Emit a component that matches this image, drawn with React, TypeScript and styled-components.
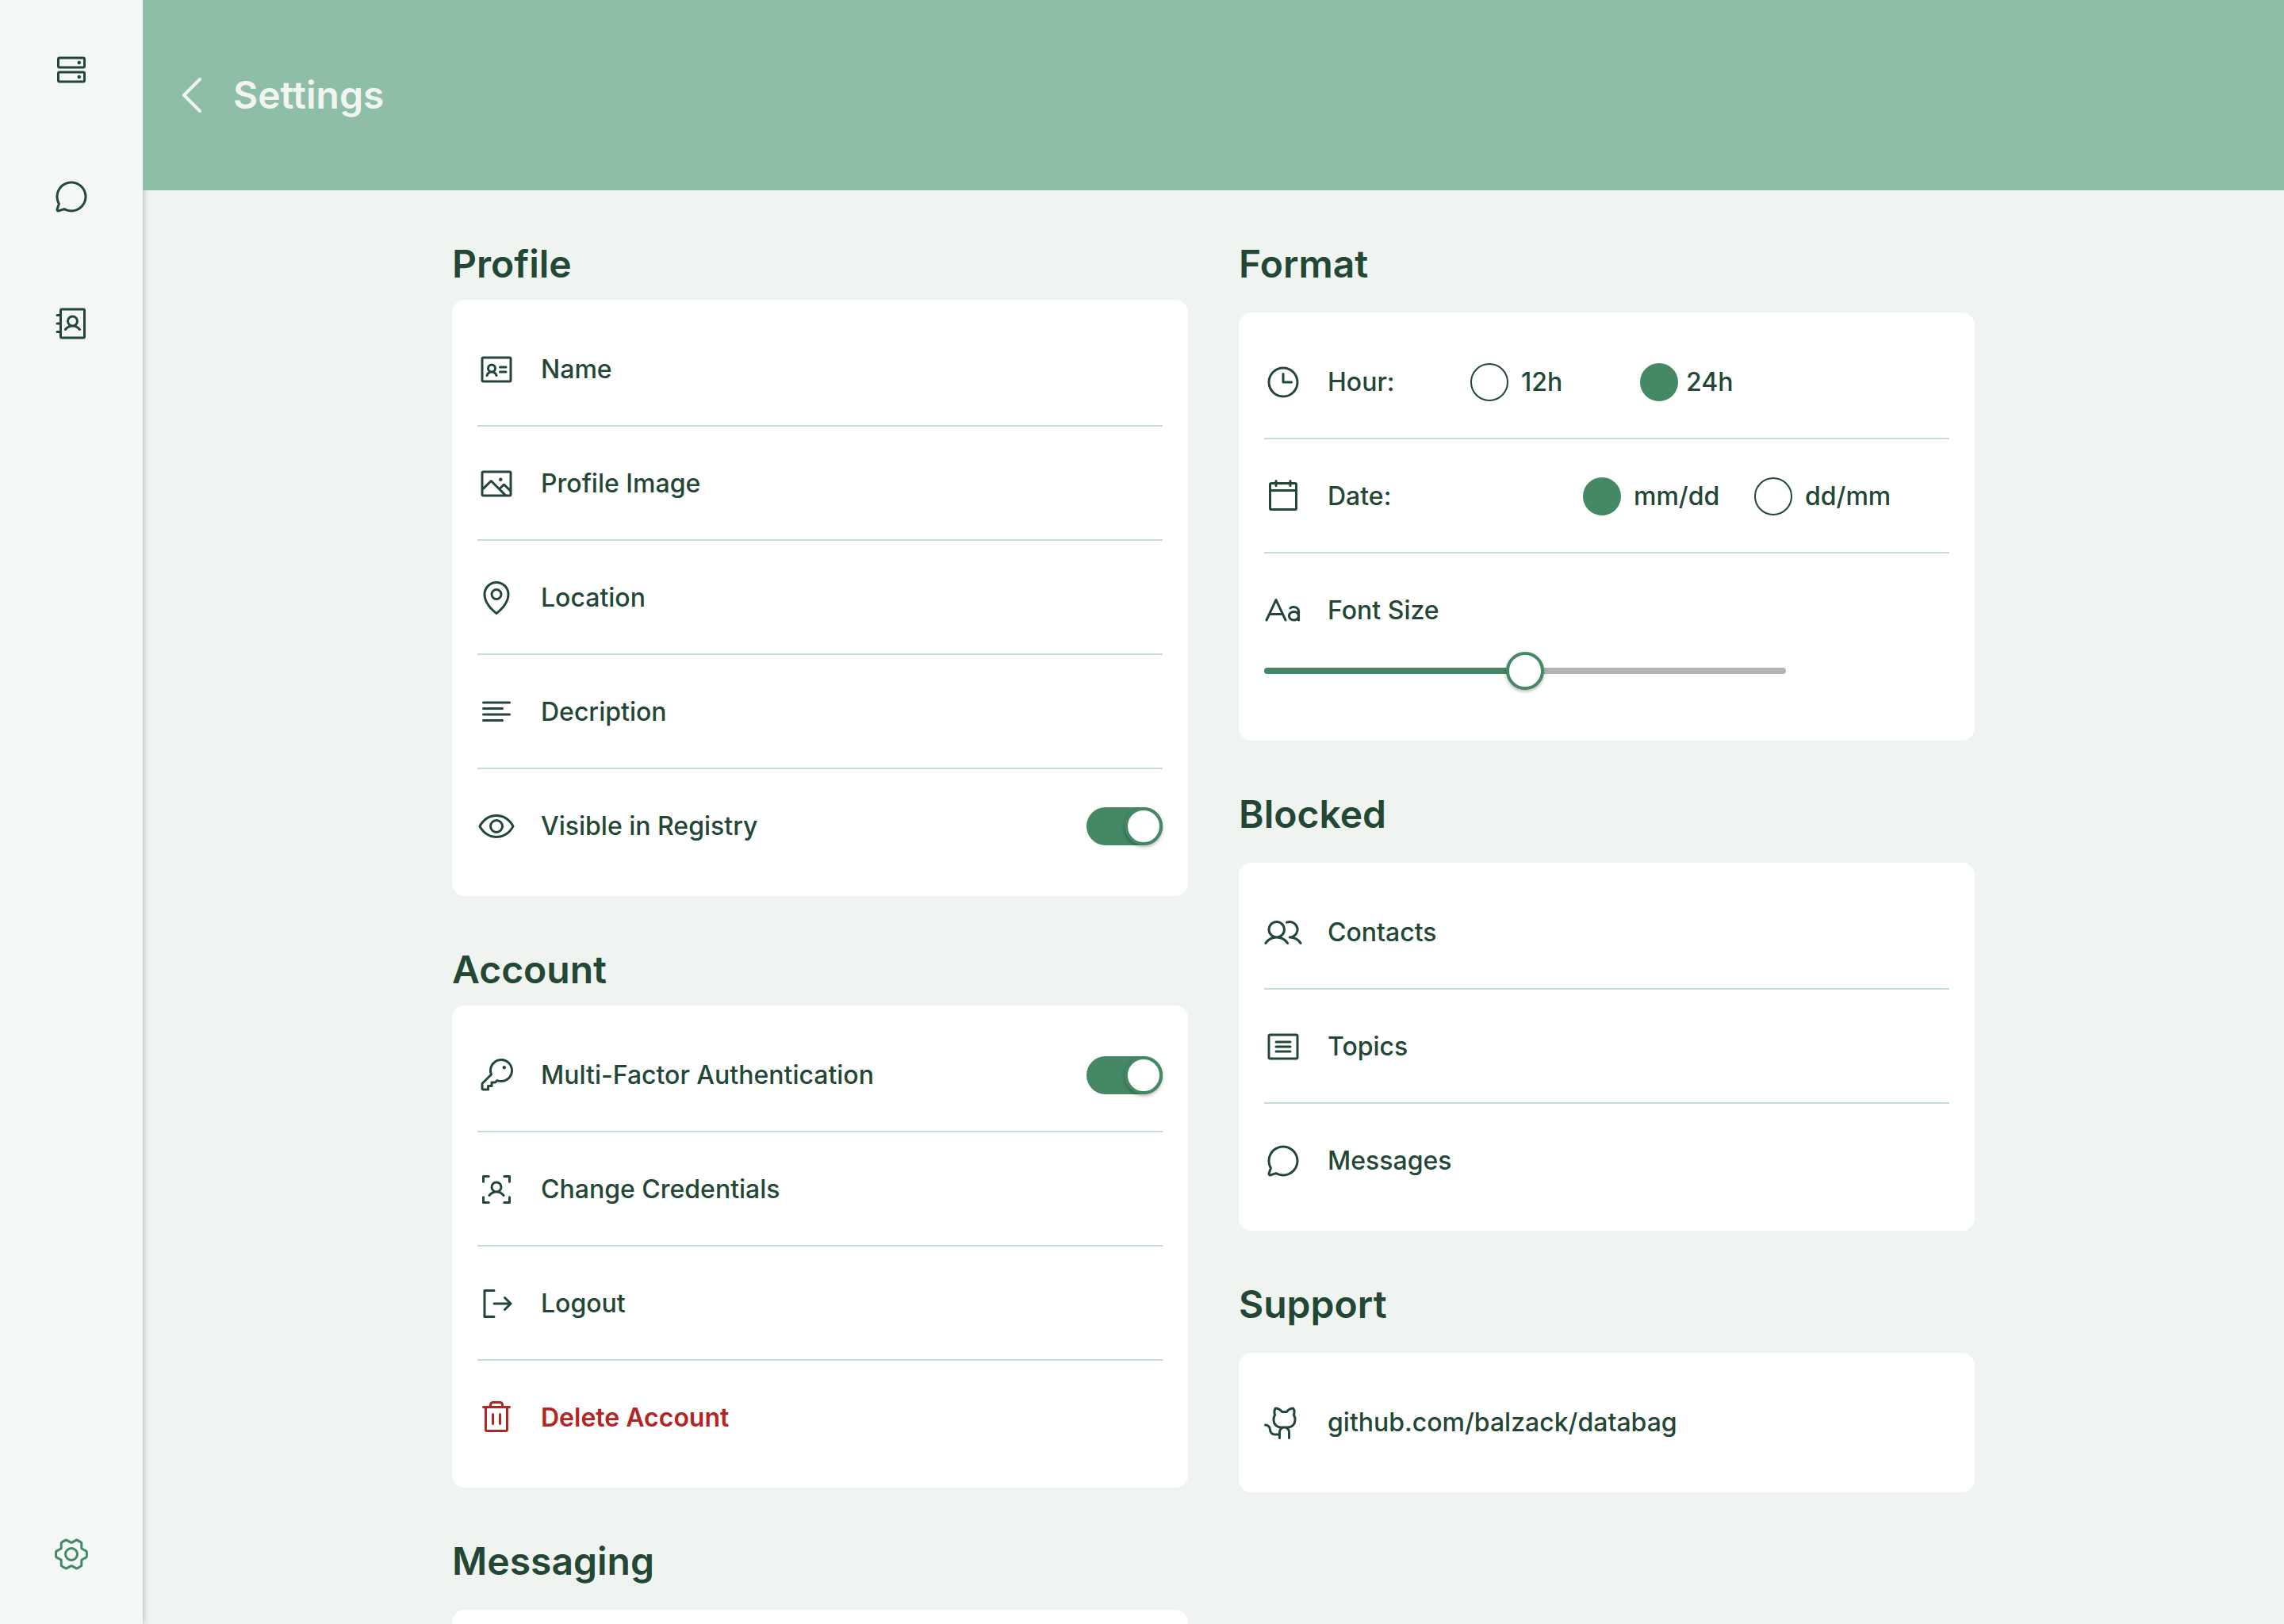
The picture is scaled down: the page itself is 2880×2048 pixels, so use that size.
import React, { useState } from "react";
import styled, { createGlobalStyle, css } from "styled-components";
import type { IconType } from "react-icons";
import {
  PiAddressBook,
  PiArticle,
  PiCalendarBlank,
  PiCaretLeft,
  PiChatCircle,
  PiClock,
  PiEye,
  PiGearSix,
  PiGithubLogo,
  PiHardDrives,
  PiIdentificationCard,
  PiImage,
  PiKey,
  PiMapPin,
  PiSignOut,
  PiTextAa,
  PiTextAlignLeft,
  PiTrash,
  PiUserFocus,
  PiUsers,
} from "react-icons/pi";

const color = {
  ink: "#234735",
  accent: "#448865",
  header: "#8fbea7",
  page: "#eff4f0",
  sidebar: "#f3f7f6",
  line: "#c4ded1",
  track: "#b3b3b3",
  danger: "#b32424",
};

const GlobalStyle = createGlobalStyle`
  *, *::before, *::after { box-sizing: border-box; }
  body {
    margin: 0;
    background: ${color.page};
    color: ${color.ink};
    font-family: Inter, "Liberation Sans", sans-serif;
    font-size: 32px;
    font-weight: 500;
    font-variant-ligatures: none;
    line-height: 48px;
  }
  button, input {
    margin: 0;
    padding: 0;
    border: 0;
    background: none;
    color: inherit;
    font: inherit;
  }
`;

const Shell = styled.div`
  display: flex;
  height: 100vh;
`;

const Sidebar = styled.nav`
  flex: none;
  display: flex;
  flex-direction: column;
  gap: 112px;
  width: 180px;
  padding: 64px 0;
  background: ${color.sidebar};
  box-shadow: 0 0 8px rgba(0, 0, 0, 0.3);
`;

const NavButton = styled.button<{ $active?: boolean }>`
  display: flex;
  justify-content: center;
  font-size: 48px;
  cursor: pointer;
  ${(p) =>
    p.$active &&
    css`
      margin-top: auto;
      color: ${color.accent};
    `}
`;

const Main = styled.div`
  flex: 1;
  display: flex;
  flex-direction: column;
  min-width: 0;
`;

const Header = styled.header`
  position: relative;
  flex: none;
  display: flex;
  align-items: center;
  gap: 18px;
  height: 240px;
  padding: 0 32px;
  background: ${color.header};
  color: #f0f5f2;
`;

const BackButton = styled.button`
  display: flex;
  font-size: 64px;
  cursor: pointer;
`;

const PageTitle = styled.h1`
  margin: 0;
  font-size: 48px;
  font-weight: 600;
  line-height: 62px;
`;

const Scroller = styled.main`
  flex: 1;
  min-height: 0;
  overflow-y: auto;
  scrollbar-width: none;
`;

const Columns = styled.div`
  display: grid;
  grid-template-columns: minmax(0, 1fr) minmax(0, 1fr);
  gap: 64px;
  max-width: 1920px;
  margin: 0 auto;
  padding: 62px 0;
`;

const Column = styled.div`
  display: flex;
  flex-direction: column;
  gap: 62px;
`;

const Section = styled.section<{ $roomy?: boolean }>`
  display: flex;
  flex-direction: column;
  gap: ${(p) => (p.$roomy ? "30px" : "14px")};
`;

const Heading = styled.h2`
  margin: 0;
  font-size: 48px;
  font-weight: 600;
  line-height: 62px;
`;

const Card = styled.div`
  padding: 16px 32px;
  border-radius: 16px;
  background: #fff;
`;

const rowStyle = css`
  display: flex;
  align-items: center;
  gap: 32px;
  width: 100%;
  height: 144px;
  color: inherit;
  text-align: left;
  text-decoration: none;

  > svg {
    flex: none;
    font-size: 48px;
  }

  &:not(:last-child) {
    box-shadow: inset 0 -2px ${color.line};
  }
`;

const ActionRow = styled.button<{ $danger?: boolean }>`
  ${rowStyle}
  cursor: pointer;
  ${(p) =>
    p.$danger &&
    css`
      color: ${color.danger};
      font-weight: 600;
    `}
`;

const LinkRow = styled.a`
  ${rowStyle}
`;

const ToggleRow = styled.label`
  ${rowStyle}
  cursor: pointer;
`;

const GroupRow = styled.div`
  ${rowStyle}
`;

const LabelRow = styled.label`
  ${rowStyle}
  &:not(:last-child) {
    box-shadow: none;
  }
`;

const knob = css`
  width: 48px;
  height: 48px;
  border: 4px solid ${color.accent};
  border-radius: 50%;
  background: #fff;
  box-shadow: 0 2px 4px rgba(0, 0, 0, 0.3);
`;

const Switch = styled.input`
  appearance: none;
  display: flex;
  width: 96px;
  height: 48px;
  margin-left: auto;
  border-radius: 24px;
  background: ${color.track};
  cursor: pointer;

  &::before {
    content: "";
    ${knob}
  }
  &:checked {
    justify-content: flex-end;
    background: ${color.accent};
  }
`;

const Choices = styled.div<{ $labelWidth: number; $optionWidth: number }>`
  display: grid;
  grid-template-columns: ${(p) => p.$labelWidth}px ${(p) => p.$optionWidth}px auto;
`;

const Choice = styled.label<{ $tight?: boolean }>`
  display: flex;
  align-items: center;
  gap: ${(p) => (p.$tight ? "10px" : "16px")};
  cursor: pointer;
`;

const Radio = styled.input`
  appearance: none;
  width: 48px;
  height: 48px;
  border: 2px solid ${color.ink};
  border-radius: 50%;
  cursor: pointer;

  &:checked {
    border-color: ${color.accent};
    background: ${color.accent};
  }
`;

const Slider = styled.input`
  appearance: none;
  display: block;
  width: 100%;
  max-width: 658px;
  height: 8px;
  margin-bottom: 68px;
  border-radius: 4px;
  cursor: pointer;

  &::-webkit-slider-runnable-track {
    height: 8px;
  }
  &::-webkit-slider-thumb {
    appearance: none;
    margin-top: -20px;
    ${knob}
  }
`;

const EmptyRow = styled.div`
  height: 144px;
`;

function Action({ icon: Icon, danger, children }: { icon: IconType; danger?: boolean; children: string }) {
  return (
    <ActionRow type="button" $danger={danger}>
      <Icon aria-hidden />
      <span>{children}</span>
    </ActionRow>
  );
}

function Toggle({ icon: Icon, children }: { icon: IconType; children: string }) {
  return (
    <ToggleRow>
      <Icon aria-hidden />
      <span>{children}</span>
      <Switch type="checkbox" role="switch" defaultChecked />
    </ToggleRow>
  );
}

function RadioRow({
  icon: Icon,
  name,
  label,
  labelWidth,
  optionWidth,
  options,
  initial,
}: {
  icon: IconType;
  name: string;
  label: string;
  labelWidth: number;
  optionWidth: number;
  options: { value: string; tight?: boolean }[];
  initial: string;
}) {
  const [value, setValue] = useState(initial);
  return (
    <GroupRow>
      <Icon aria-hidden />
      <Choices
        role="radiogroup"
        aria-labelledby={`${name}-label`}
        $labelWidth={labelWidth}
        $optionWidth={optionWidth}
      >
        <span id={`${name}-label`}>{label}</span>
        {options.map((option) => (
          <Choice key={option.value} $tight={option.tight}>
            <Radio
              type="radio"
              name={name}
              value={option.value}
              checked={value === option.value}
              onChange={() => setValue(option.value)}
            />
            <span>{option.value}</span>
          </Choice>
        ))}
      </Choices>
    </GroupRow>
  );
}

function FontSize() {
  const [size, setSize] = useState(50);
  return (
    <>
      <LabelRow htmlFor="font-size">
        <PiTextAa aria-hidden />
        <span>Font Size</span>
      </LabelRow>
      <Slider
        id="font-size"
        type="range"
        min={0}
        max={100}
        value={size}
        onChange={(e) => setSize(Number(e.target.value))}
        style={{
          background: `linear-gradient(to right, ${color.accent} ${size}%, ${color.track} ${size}%)`,
        }}
      />
    </>
  );
}

export default function App() {
  return (
    <>
      <GlobalStyle />
      <Shell>
        <Sidebar>
          <NavButton type="button" aria-label="Servers">
            <PiHardDrives />
          </NavButton>
          <NavButton type="button" aria-label="Chats">
            <PiChatCircle />
          </NavButton>
          <NavButton type="button" aria-label="Address book">
            <PiAddressBook />
          </NavButton>
          <NavButton type="button" aria-label="Settings" $active>
            <PiGearSix />
          </NavButton>
        </Sidebar>
        <Main>
          <Header>
            <BackButton type="button" aria-label="Back">
              <PiCaretLeft />
            </BackButton>
            <PageTitle>Settings</PageTitle>
          </Header>
          <Scroller>
            <Columns>
              <Column>
                <Section>
                  <Heading>Profile</Heading>
                  <Card>
                    <Action icon={PiIdentificationCard}>Name</Action>
                    <Action icon={PiImage}>Profile Image</Action>
                    <Action icon={PiMapPin}>Location</Action>
                    <Action icon={PiTextAlignLeft}>Decription</Action>
                    <Toggle icon={PiEye}>Visible in Registry</Toggle>
                  </Card>
                </Section>
                <Section>
                  <Heading>Account</Heading>
                  <Card>
                    <Toggle icon={PiKey}>Multi-Factor Authentication</Toggle>
                    <Action icon={PiUserFocus}>Change Credentials</Action>
                    <Action icon={PiSignOut}>Logout</Action>
                    <Action icon={PiTrash} danger>
                      Delete Account
                    </Action>
                  </Card>
                </Section>
                <Section $roomy>
                  <Heading>Messaging</Heading>
                  <Card>
                    <EmptyRow />
                  </Card>
                </Section>
              </Column>
              <Column>
                <Section $roomy>
                  <Heading>Format</Heading>
                  <Card>
                    <RadioRow
                      icon={PiClock}
                      name="hour"
                      label="Hour:"
                      labelWidth={180}
                      optionWidth={214}
                      options={[{ value: "12h" }, { value: "24h", tight: true }]}
                      initial="24h"
                    />
                    <RadioRow
                      icon={PiCalendarBlank}
                      name="date"
                      label="Date:"
                      labelWidth={322}
                      optionWidth={216}
                      options={[{ value: "mm/dd" }, { value: "dd/mm" }]}
                      initial="mm/dd"
                    />
                    <FontSize />
                  </Card>
                </Section>
                <Section $roomy>
                  <Heading>Blocked</Heading>
                  <Card>
                    <Action icon={PiUsers}>Contacts</Action>
                    <Action icon={PiArticle}>Topics</Action>
                    <Action icon={PiChatCircle}>Messages</Action>
                  </Card>
                </Section>
                <Section $roomy>
                  <Heading>Support</Heading>
                  <Card>
                    <LinkRow href="https://github.com/balzack/databag">
                      <PiGithubLogo aria-hidden />
                      <span>github.com/balzack/databag</span>
                    </LinkRow>
                  </Card>
                </Section>
              </Column>
            </Columns>
          </Scroller>
        </Main>
      </Shell>
    </>
  );
}
